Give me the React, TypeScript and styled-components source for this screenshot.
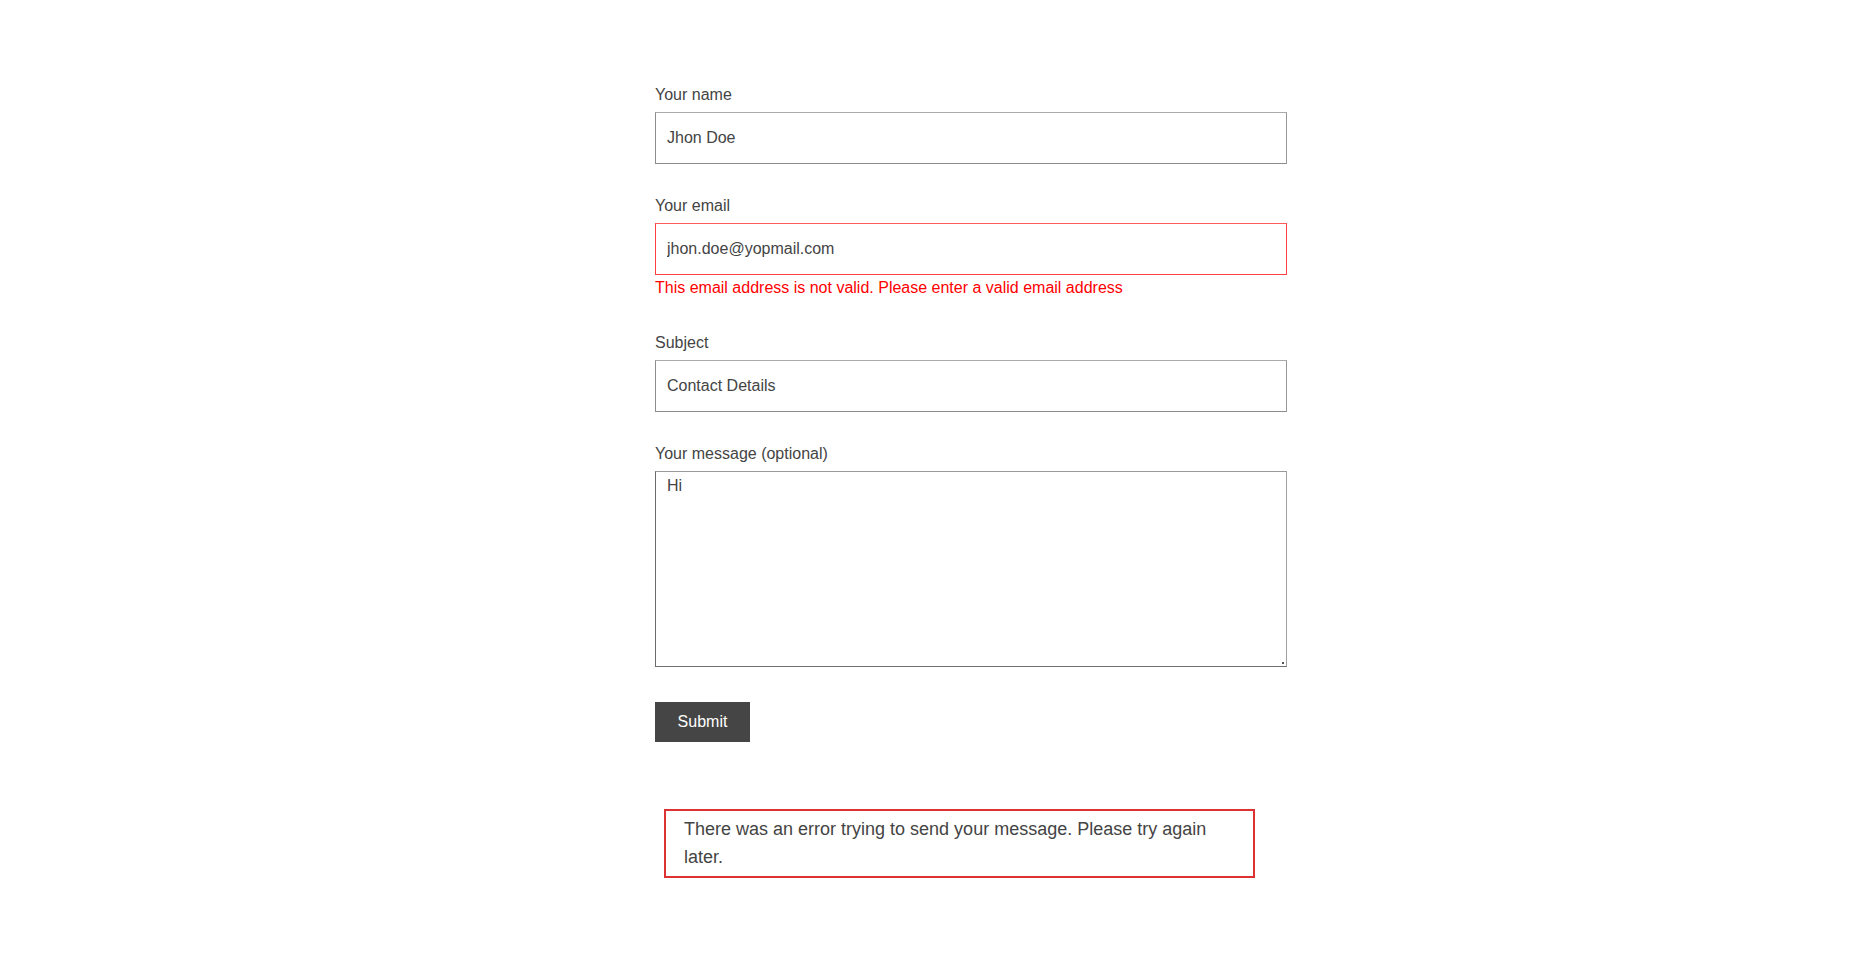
import React from "react";
import styled, { createGlobalStyle } from "styled-components";

const GlobalStyle = createGlobalStyle`
  html, body {
    margin: 0;
    padding: 0;
    background: #ffffff;
  }
  body {
    font-family: "Liberation Sans", Arial, sans-serif;
    color: #444444;
  }
  * { box-sizing: border-box; }
`;

const Page = styled.div`
  width: 1870px;
  min-height: 971px;
  padding-top: 83px;
`;

const Form = styled.form`
  width: 632px;
  margin-left: 655px;
  display: flex;
  flex-direction: column;
`;

const Field = styled.div<{ $mb?: number }>`
  display: flex;
  flex-direction: column;
  margin-bottom: ${(p) => (p.$mb ?? 30)}px;
`;

const Label = styled.label`
  font-size: 16px;
  line-height: 24px;
  color: #444444;
  margin-bottom: 5px;
`;

const Input = styled.input<{ $invalid?: boolean }>`
  width: 632px;
  height: 52px;
  padding: 0 11px;
  font-family: "Liberation Sans", Arial, sans-serif;
  font-size: 16px;
  color: #444444;
  background: #ffffff;
  border: 1px solid;
  border-color: ${(p) =>
    p.$invalid ? "#ff5a5a #ff4040 #ff4040 #ff4040" : "#aaaaaa #999999 #8c8c8c #8c8c8c"};
  border-radius: 0;
  outline: none;
`;

const AreaWrap = styled.div`
  position: relative;
  width: 632px;
  height: 196px;
`;

const TextArea = styled.textarea`
  display: block;
  width: 632px;
  height: 196px;
  padding: 2px 11px;
  font-family: "Liberation Sans", Arial, sans-serif;
  font-size: 16px;
  line-height: 24px;
  color: #444444;
  background: #ffffff;
  border: 1px solid;
  border-color: #9a9a9a #a0a0a0 #707070 #6b6b6b;
  border-radius: 0;
  outline: none;
  resize: none;
`;

const ResizeDot = styled.span`
  position: absolute;
  right: 3px;
  bottom: 3px;
  width: 2px;
  height: 2px;
  background: #555555;
`;

const ErrorTip = styled.span`
  margin-top: 1px;
  font-size: 16px;
  line-height: 24px;
  color: #ff0000;
`;

const SubmitButton = styled.button`
  align-self: flex-start;
  margin-top: 35px;
  width: 95px;
  height: 40px;
  padding: 0 0 1px;
  border: none;
  border-radius: 0;
  background: #454545;
  color: #ffffff;
  font-family: "Liberation Sans", Arial, sans-serif;
  font-size: 16px;
  cursor: pointer;
`;

const ResponseOutput = styled.div`
  margin: 67px 32px 0 9px;
  padding: 3.6px 18px;
  border: 2px solid #dc3232;
  font-size: 18px;
  line-height: 28.8px;
  color: #444444;
`;

export default function App() {
  return (
    <>
      <GlobalStyle />
      <Page>
        <Form onSubmit={(e) => e.preventDefault()}>
          <Field>
            <Label>Your name</Label>
            <Input type="text" defaultValue="Jhon Doe" />
          </Field>
          <Field $mb={31}>
            <Label>Your email</Label>
            <Input type="text" $invalid defaultValue="jhon.doe@yopmail.com" />
            <ErrorTip>This email address is not valid. Please enter a valid email address</ErrorTip>
          </Field>
          <Field $mb={30}>
            <Label>Subject</Label>
            <Input type="text" defaultValue="Contact Details" />
          </Field>
          <Field $mb={0}>
            <Label>Your message (optional)</Label>
            <AreaWrap>
              <TextArea defaultValue="Hi" />
              <ResizeDot />
            </AreaWrap>
          </Field>
          <SubmitButton type="submit">Submit</SubmitButton>
          <ResponseOutput>
            There was an error trying to send your message. Please try again later.
          </ResponseOutput>
        </Form>
      </Page>
    </>
  );
}
